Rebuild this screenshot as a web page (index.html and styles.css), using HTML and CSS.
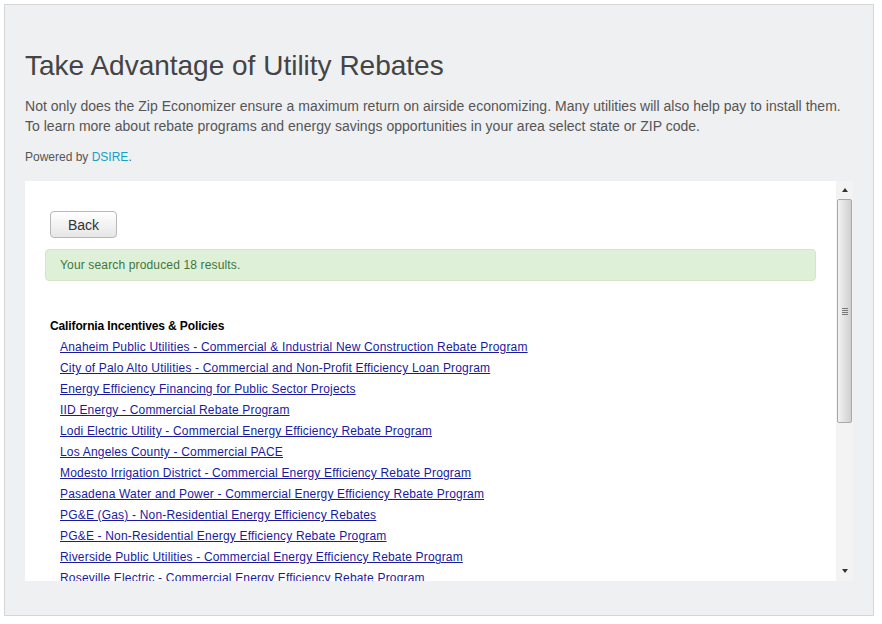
FILE: index.html
```html
<!DOCTYPE html>
<html>
<head>
<meta charset="utf-8">
<link rel="stylesheet" href="styles.css">
</head>
<body>
<div class="outer">
  <h1 class="title">Take Advantage of Utility Rebates</h1>
  <p class="intro">Not only does the Zip Economizer ensure a maximum return on airside economizing. Many utilities will also help pay to install them.<br>To learn more about rebate programs and energy savings opportunities in your area select state or ZIP code.</p>
  <p class="powered">Powered by <a class="dsire" href="#">DSIRE</a>.</p>
  <div class="frame">
    <div class="content">
      <button class="back">Back</button>
      <div class="alert">Your search produced 18 results.</div>
      <div class="group">
        <div class="group-title">California Incentives &amp; Policies</div>
        <ul class="links">
          <li><a href="#">Anaheim Public Utilities - Commercial &amp; Industrial New Construction Rebate Program</a></li>
          <li><a href="#">City of Palo Alto Utilities - Commercial and Non-Profit Efficiency Loan Program</a></li>
          <li><a href="#">Energy Efficiency Financing for Public Sector Projects</a></li>
          <li><a href="#">IID Energy - Commercial Rebate Program</a></li>
          <li><a href="#">Lodi Electric Utility - Commercial Energy Efficiency Rebate Program</a></li>
          <li><a href="#">Los Angeles County - Commercial PACE</a></li>
          <li><a href="#">Modesto Irrigation District - Commercial Energy Efficiency Rebate Program</a></li>
          <li><a href="#">Pasadena Water and Power - Commercial Energy Efficiency Rebate Program</a></li>
          <li><a href="#">PG&amp;E (Gas) - Non-Residential Energy Efficiency Rebates</a></li>
          <li><a href="#">PG&amp;E - Non-Residential Energy Efficiency Rebate Program</a></li>
          <li><a href="#">Riverside Public Utilities - Commercial Energy Efficiency Rebate Program</a></li>
          <li><a href="#">Roseville Electric - Commercial Energy Efficiency Rebate Program</a></li>
        </ul>
      </div>
    </div>
    <div class="scrollbar">
      <div class="arrow up"></div>
      <div class="track">
        <div class="thumb"><div class="grip"></div></div>
      </div>
      <div class="arrow down"></div>
    </div>
  </div>
</div>
</body>
</html>
```
FILE: styles.css
```css
html, body {
  margin: 0;
  padding: 0;
  background: #ffffff;
}
body {
  font-family: "Liberation Sans", Arial, sans-serif;
}
.outer {
  margin: 4px 0 0 4px;
  width: 828px;
  height: 610px;
  padding: 0 20px;
  background: #eff0f2;
  border: 1px solid #d6d6d6;
  display: flex;
  flex-direction: column;
}
.title {
  margin: 45px 0 0 0;
  font-size: 28px;
  font-weight: normal;
  line-height: 32px;
  color: #444444;
}
.intro {
  margin: 14px 0 0 0;
  font-size: 14px;
  line-height: 20px;
  color: #555555;
  letter-spacing: 0.02px;
}
.powered {
  margin: 13px 0 0 0;
  font-size: 12px;
  line-height: 16px;
  color: #555555;
}
.dsire {
  color: #16a1c7;
  text-decoration: none;
}
.frame {
  margin-top: 16px;
  height: 400px;
  display: flex;
  background: #ffffff;
}
.content {
  flex: 1;
  overflow: hidden;
  padding: 30px 20px 0 20px;
}
.back {
  margin-left: 5px;
  width: 67px;
  height: 27px;
  font-family: "Liberation Sans", Arial, sans-serif;
  font-size: 14px;
  color: #333333;
  background: linear-gradient(#ffffff, #e6e6e6);
  border: 1px solid #b8b8b8;
  border-radius: 4px;
  padding: 0;
  display: block;
}
.alert {
  margin-top: 11px;
  height: 30px;
  padding: 0 14px;
  background: #dff0d8;
  border: 1px solid #d2e7c6;
  border-radius: 4px;
  color: #3c763d;
  font-size: 12px;
  line-height: 30px;
  letter-spacing: 0.15px;
}
.group {
  margin-top: 37px;
  padding-left: 5px;
}
.group-title {
  font-size: 12px;
  font-weight: bold;
  line-height: 16px;
  color: #000000;
  letter-spacing: -0.12px;
}
.links {
  list-style: none;
  margin: 3px 0 0 0;
  padding: 0 0 0 10px;
}
.links li {
  font-size: 12px;
  line-height: 21px;
}
.links a {
  color: #1a1aa0;
  text-decoration: underline;
  letter-spacing: 0.18px;
}
.scrollbar {
  width: 17px;
  background: #f3f3f3;
  display: flex;
  flex-direction: column;
  align-items: center;
}
.arrow {
  width: 0;
  height: 0;
  border-left: 3px solid transparent;
  border-right: 3px solid transparent;
}
.arrow.up {
  margin-top: 7px;
  border-bottom: 4px solid #333333;
}
.arrow.down {
  margin-top: auto;
  margin-bottom: 8px;
  border-top: 4px solid #333333;
}
.track {
  width: 15px;
  margin-top: 7px;
  height: 370px;
}
.thumb {
  height: 224px;
  box-sizing: border-box;
  border: 1px solid #a9a9a9;
  border-radius: 2px;
  background: linear-gradient(to right, #f2f2f2, #dadada 70%, #cfcfcf);
  display: flex;
  align-items: center;
  justify-content: center;
}
.grip {
  width: 6px;
  height: 7px;
  background: repeating-linear-gradient(#777777 0, #777777 1px, transparent 1px, transparent 2px);
}
```
